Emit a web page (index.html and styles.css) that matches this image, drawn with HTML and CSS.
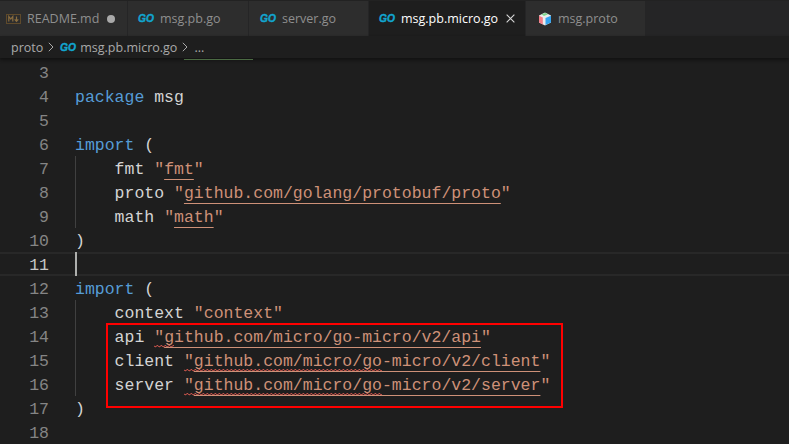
FILE: index.html
```html
<!DOCTYPE html>
<html lang="en">
<head>
<meta charset="utf-8">
<title>msg.pb.micro.go</title>
<link rel="stylesheet" href="styles.css">
</head>
<body>
<div class="window">
  <div class="tabs">
    <div class="tab tab-readme">
      <svg class="ico-md" viewBox="0 0 15 10"><rect x="0.5" y="0.5" width="14" height="9" fill="none" stroke="#5f4a2b"/><path d="M2.8 7.5V2.5L4.8 5L6.8 2.5V7.5M10.5 2.5V7M8.7 5.4L10.5 7.4L12.3 5.4" fill="none" stroke="#8a6d3f" stroke-width="1.2"/></svg>
      <span>README.md</span><i class="dot"></i>
    </div>
    <div class="tab tab-pb"><svg class="ico-go" viewBox="0 0 16 9"><text x="0" y="8.2" class="go-t" textLength="16" lengthAdjust="spacingAndGlyphs">GO</text></svg><span>msg.pb.go</span></div>
    <div class="tab tab-server"><svg class="ico-go" viewBox="0 0 16 9"><text x="0" y="8.2" class="go-t" textLength="16" lengthAdjust="spacingAndGlyphs">GO</text></svg><span>server.go</span></div>
    <div class="tab tab-active"><svg class="ico-go" viewBox="0 0 16 9"><text x="0" y="8.2" class="go-t" textLength="16" lengthAdjust="spacingAndGlyphs">GO</text></svg><span>msg.pb.micro.go</span>
      <svg class="ico-x" viewBox="0 0 10 10"><path d="M0.7 0.7L9.3 9.3M9.3 0.7L0.7 9.3" stroke="#d8d8d8" stroke-width="1.2" fill="none"/></svg>
    </div>
    <div class="tab tab-proto">
      <svg class="ico-proto" viewBox="0 0 14 14"><path d="M7 0.5L13 3.5V10.5L7 13.5L1 10.5V3.5Z" fill="#ececec"/><path d="M1 3.8L4.8 5.6V12.4L1 10.5Z" fill="#f47d86"/><path d="M3.5 2.2L7.5 0.9L10 2.2L6 4Z" fill="#7ed68c"/><path d="M7.5 6L13 3.8V10.5L7.5 13Z" fill="#35a4ef"/></svg>
      <span>msg.proto</span>
    </div>
  </div>
  <div class="crumbs">
    <span>proto</span>
    <svg class="chev" viewBox="0 0 6 10"><path d="M0.8 0.8L5 5L0.8 9.2" fill="none" stroke="#a9a9a9" stroke-width="1"/></svg>
    <svg class="ico-go ico-crumb" viewBox="0 0 16 9"><text x="0" y="8.2" class="go-t" textLength="16" lengthAdjust="spacingAndGlyphs">GO</text></svg>
    <span>msg.pb.micro.go</span>
    <svg class="chev" viewBox="0 0 6 10"><path d="M0.8 0.8L5 5L0.8 9.2" fill="none" stroke="#a9a9a9" stroke-width="1"/></svg>
    <span>...</span>
    <i class="green-mark"></i>
  </div>
  <div class="editor">
    <div class="row"><b class="num">3</b><code></code></div>
    <div class="row"><b class="num">4</b><code><span class="kw">package</span> msg</code></div>
    <div class="row"><b class="num">5</b><code></code></div>
    <div class="row"><b class="num">6</b><code><span class="kw">import</span> (</code></div>
    <div class="row"><b class="num">7</b><code class="guide">    fmt <span class="str">"<u>fmt</u>"</span></code></div>
    <div class="row"><b class="num">8</b><code class="guide">    proto <span class="str">"<u>github.com/golang/protobuf/proto</u>"</span></code></div>
    <div class="row"><b class="num">9</b><code class="guide">    math <span class="str">"<u>math</u>"</span></code></div>
    <div class="row"><b class="num">10</b><code>)</code></div>
    <div class="row row-current"><b class="num">11</b><code><i class="cursor"></i></code></div>
    <div class="row"><b class="num">12</b><code><span class="kw">import</span> (</code></div>
    <div class="row"><b class="num">13</b><code class="guide">    context <span class="str">"context"</span></code></div>
    <div class="row"><b class="num">14</b><code class="guide">    api <span class="str"><em class="sq">"<u>g</u></em><u>ithub.com/micro/go-micro/v2/api</u>"</span></code></div>
    <div class="row"><b class="num">15</b><code class="guide">    client <span class="str"><em class="sq">"<u>github.com/micro/go</u></em><u>-micro/v2/client</u>"</span></code></div>
    <div class="row"><b class="num">16</b><code class="guide">    server <span class="str"><em class="sq">"<u>github.com/micro/go</u></em><u>-micro/v2/server</u>"</span></code></div>
    <div class="row"><b class="num">17</b><code>)</code></div>
    <div class="row"><b class="num">18</b><code></code></div>
    <div class="redbox"></div>
  </div>
</div>
</body>
</html>
```
FILE: styles.css
```css
html, body { margin: 0; padding: 0; background: #1e1e1e; }
.window { width: 789px; height: 444px; overflow: hidden; display: flex; flex-direction: column; font-family: "Open Sans", "Liberation Sans", sans-serif; }
.tabs { box-sizing: border-box; height: 36px; display: flex; background: #252526; flex: none; border-top: 1px solid #222222; }
.tab { box-sizing: border-box; height: 35px; background: #2d2d2d; border-right: 1px solid #252526; display: flex; align-items: center; font-size: 12.5px; color: #8f8f8f; padding-left: 6px; }
.tab-readme { width: 128px; }
.tab-pb { width: 121px; padding-left: 10px; }
.tab-server { width: 120px; padding-left: 11px; }
.tab-active { width: 157px; background: #1e1e1e; color: #ffffff; padding-left: 10px; }
.tab-proto { width: 120px; padding-left: 12px; }
.ico-md { width: 15px; height: 10px; margin-right: 6px; }
.ico-go { width: 16px; height: 9px; margin-right: 6px; overflow: visible; }
.ico-crumb { margin-right: 4px; }
.go-t { font: italic 700 10.5px "Liberation Sans", sans-serif; fill: #12a5cf; stroke: #12a5cf; stroke-width: 0.4px; }
.ico-x { width: 9px; height: 9px; margin-left: 8px; }
.ico-proto { width: 14px; height: 14px; margin-right: 6px; }
.dot { width: 8px; height: 8px; border-radius: 50%; background: #a9a9a9; margin-left: 8px; }
.crumbs { height: 22px; flex: none; display: flex; align-items: center; padding-left: 11px; font-size: 12.5px; color: #a9a9a9; background: #1e1e1e; box-shadow: 0 2px 3px #111; position: relative; z-index: 1; }
.chev { width: 6px; height: 10px; margin: 0 6px 0 5px; }
.green-mark { position: absolute; left: 184px; top: 23px; width: 69px; height: 1px; background: #4b6a43; }
.editor { position: relative; flex: 1; padding-top: 2px; font: 16.5px/28px "Liberation Mono", monospace; color: #d4d4d4; }
.row { display: flex; height: 24px; }
.num { width: 49px; flex: none; text-align: right; font-weight: 400; color: #858585; }
.row code { margin-left: 26px; font: inherit; white-space: pre; position: relative; flex: 1; }
.guide::before { content: ""; position: absolute; left: 0; top: 0; bottom: 0; width: 1px; background: #404040; }
.kw { color: #569cd6; }
.str { color: #ce9178; }
.str u { text-decoration: underline 1px #ce9178; text-underline-offset: 5px; }
.sq { font-style: normal; padding-bottom: 1px; background: url("data:image/svg+xml,%3Csvg xmlns='http://www.w3.org/2000/svg' width='4' height='3'%3E%3Cpath d='M0 0.6Q1 2.8 2 1.5T4 0.6' fill='none' stroke='%23d9584f' stroke-width='1'/%3E%3C/svg%3E") repeat-x left bottom; }
.row-current { box-sizing: border-box; border-top: 2px solid #282828; border-bottom: 2px solid #282828; line-height: 24px; }
.row-current .num { color: #c6c6c6; }
.cursor { position: absolute; left: 0; top: -2px; bottom: -2px; width: 2px; background: #aeafad; }
.redbox { position: absolute; left: 106px; top: 265px; width: 453px; height: 81px; border: 2px solid #ff0000; }
```
